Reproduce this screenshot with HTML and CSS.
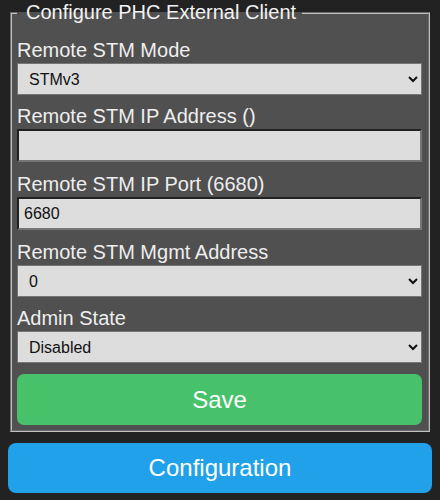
FILE: index.html
```html
<!DOCTYPE html>
<html>
<head>
<meta charset="utf-8">
<link rel="stylesheet" href="styles.css">
</head>
<body>
<form class="client-form">
  <fieldset class="panel">
    <legend class="panel-title">Configure PHC External Client</legend>
    <label class="field-label" for="mode">Remote STM Mode</label>
    <select class="field-control field-select" id="mode">
      <option>STMv3</option>
    </select>
    <label class="field-label" for="ip">Remote STM IP Address ()</label>
    <input class="field-control field-input" id="ip" type="text" value="">
    <label class="field-label" for="port">Remote STM IP Port (6680)</label>
    <input class="field-control field-input" id="port" type="text" value="6680">
    <label class="field-label" for="mgmt">Remote STM Mgmt Address</label>
    <select class="field-control field-select" id="mgmt">
      <option>0</option>
    </select>
    <label class="field-label" for="admin">Admin State</label>
    <select class="field-control field-select" id="admin">
      <option>Disabled</option>
    </select>
    <button class="btn btn-save" type="button">Save</button>
  </fieldset>
  <button class="btn btn-config" type="button">Configuration</button>
</form>
</body>
</html>
```

FILE: styles.css
```css
html {
  background: #222222;
}

body {
  margin: 0 8px 7px;
  background: #222222;
  font-family: "Liberation Sans", Arial, sans-serif;
}

.client-form {
  display: flex;
  flex-direction: column;
}

.panel {
  margin: 1px 2px 0;
  padding: 15px 6px 5px 5px;
  border: 2px groove #c0c0c0;
  background: #505050;
  display: flex;
  flex-direction: column;
  min-width: 0;
}

.panel-title {
  color: #f2f2f2;
  font-size: 20px;
  line-height: 23px;
  padding: 0 6px 0 9px;
}

.field-label {
  color: #eeeeee;
  font-size: 20px;
  line-height: 23px;
  display: block;
}

.field-control {
  display: block;
  width: 100%;
  box-sizing: border-box;
  font-family: "Liberation Sans", Arial, sans-serif;
  font-size: 16px;
  color: #111111;
  background: #dddddd;
  margin: 1px 0 10px;
}

.field-select {
  height: 32px;
  padding: 0 7px;
  border: 1px solid #767676;
  border-radius: 0;
}

.field-input {
  height: 33px;
  margin-bottom: 11px;
  padding: 0 5px;
  border: 2px inset #767676;
}

.btn {
  display: block;
  width: 100%;
  border: none;
  color: #ffffff;
  font-family: "Liberation Sans", Arial, sans-serif;
  font-size: 24px;
  cursor: pointer;
}

.btn-save {
  height: 51px;
  margin-top: 1px;
  background: #47c26a;
  border-radius: 7px;
}

.btn-config {
  height: 50px;
  margin-top: 11px;
  background: #20a1ea;
  border-radius: 8px;
}
```
